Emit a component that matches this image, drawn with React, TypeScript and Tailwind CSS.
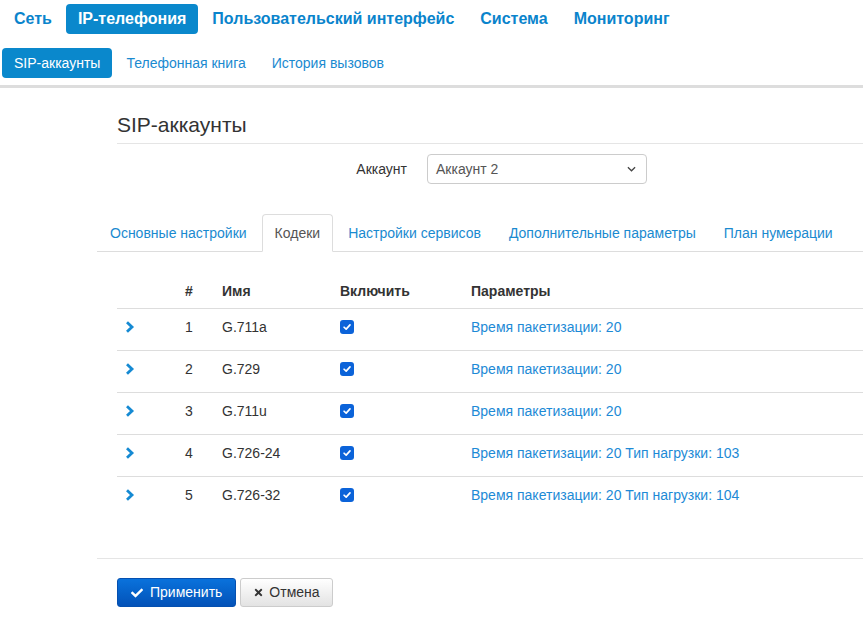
import { FaCheck, FaTimes } from "react-icons/fa";

const topNav = ["Сеть", "IP-телефония", "Пользовательский интерфейс", "Система", "Мониторинг"];
const subNav = ["SIP-аккаунты", "Телефонная книга", "История вызовов"];
const tabs = ["Основные настройки", "Кодеки", "Настройки сервисов", "Дополнительные параметры", "План нумерации"];

const codecs = [
  { n: 1, name: "G.711a", params: "Время пакетизации: 20" },
  { n: 2, name: "G.729", params: "Время пакетизации: 20" },
  { n: 3, name: "G.711u", params: "Время пакетизации: 20" },
  { n: 4, name: "G.726-24", params: "Время пакетизации: 20 Тип нагрузки: 103" },
  { n: 5, name: "G.726-32", params: "Время пакетизации: 20 Тип нагрузки: 104" },
];

const cols = "grid grid-cols-[60px_37px_118px_131px_1fr]";

function Checkbox() {
  return (
    <span className="mt-[3px] flex h-[14px] w-[14px] items-center justify-center rounded-[3px] bg-[#0b63d9]">
      <svg viewBox="0 0 12 12" className="h-[10px] w-[10px]" fill="none" stroke="white" strokeWidth="2" strokeLinecap="round" strokeLinejoin="round">
        <path d="M2.5 6.3 L5 8.6 L9.6 3.4" />
      </svg>
    </span>
  );
}

function Chevron() {
  return (
    <svg viewBox="0 0 10 12" className="h-[12px] w-[10px]" fill="none" stroke="#158ad3" strokeWidth="2.8" strokeLinejoin="miter">
      <path d="M2 1.3 L7 6 L2 10.7" />
    </svg>
  );
}

export default function App() {
  return (
    <div className="min-h-screen bg-white font-['Liberation_Sans',Arial,sans-serif] text-[14px] text-[#333]">
      {/* main menu */}
      <div className="ml-[2px] flex gap-[2px] pt-[4px]">
        {topNav.map((t) => (
          <div
            key={t}
            className={
              "flex h-[30px] items-center rounded-[4px] px-3 text-[16px] font-bold " +
              (t === "IP-телефония" ? "bg-[#0a88cc] text-white" : "text-[#0a84cc]")
            }
          >
            {t}
          </div>
        ))}
      </div>
      <div className="ml-[2px] mt-[14px] flex gap-[2px]">
        {subNav.map((t) => (
          <div
            key={t}
            className={
              "flex h-[30px] items-center rounded-[4px] px-3 " +
              (t === "SIP-аккаунты" ? "bg-[#0a88cc] text-white" : "text-[#1a8ad0]")
            }
          >
            {t}
          </div>
        ))}
      </div>
      <div className="mt-[7px] h-[3px] bg-[#dddddd]" />

      <div className="ml-[97px]">
        <div className="ml-5 mt-[25px] border-b border-[#e5e5e5] pb-[7px]">
          <h3 className="text-[21px] leading-[23px] text-[#333]">SIP-аккаунты</h3>
        </div>

        <div className="mt-[10px] flex items-center gap-5 pl-5">
          <label className="w-[290px] text-right">Аккаунт</label>
          <div className="flex h-[30px] w-[220px] items-center justify-between rounded-[4px] border border-[#cccccc] pl-2 pr-[10px] text-[#555]">
            <span>Аккаунт 2</span>
            <svg viewBox="0 0 10 6" className="h-[6px] w-[9px]" fill="none" stroke="#444" strokeWidth="1.4">
              <path d="M1 1 L5 5 L9 1" />
            </svg>
          </div>
        </div>

        <div className="mt-[30px] flex gap-[2px] border-b border-[#dddddd]">
          {tabs.map((t) => (
            <div
              key={t}
              className={
                "-mb-px rounded-t-[4px] border px-3 py-2 leading-5 " +
                (t === "Кодеки"
                  ? "border-[#dddddd] border-b-white bg-white text-[#555]"
                  : "border-transparent text-[#1a8ad0]")
              }
            >
              {t}
            </div>
          ))}
        </div>

        <div className="ml-5 mt-[21px]">
          <div className={cols + " h-[36px] border-b border-[#dddddd] pt-2 font-bold leading-5"}>
            <div />
            <div className="px-2">#</div>
            <div className="px-2">Имя</div>
            <div className="px-2">Включить</div>
            <div className="px-2">Параметры</div>
          </div>
          {codecs.map((c, i) => (
            <div
              key={c.n}
              className={cols + " pt-2 leading-5 " + (i === 0 ? "h-[41px]" : "h-[42px] border-t border-[#dddddd]")}
            >
              <div className="flex h-5 items-center px-2">
                <Chevron />
              </div>
              <div className="px-2">{c.n}</div>
              <div className="px-2">{c.name}</div>
              <div className="px-2">
                <Checkbox />
              </div>
              <div className="px-2 text-[#1d8ad6]">{c.params}</div>
            </div>
          ))}
        </div>

        <div className="mt-[40px] border-t border-[#e5e5e5]" />

        <div className="ml-5 mt-[19px] flex gap-1">
          <button className="flex h-[29px] items-center gap-[7px] rounded-[3px] border border-[#0550b0] bg-gradient-to-b from-[#0a72dc] to-[#0452b8] px-[13px] text-white">
            <FaCheck size={12} />
            Применить
          </button>
          <button className="flex h-[29px] items-center gap-[5px] rounded-[3px] border border-[#cccccc] bg-gradient-to-b from-white to-[#e3e3e3] px-3 text-[#333]">
            <FaTimes size={11} />
            Отмена
          </button>
        </div>
      </div>
    </div>
  );
}
